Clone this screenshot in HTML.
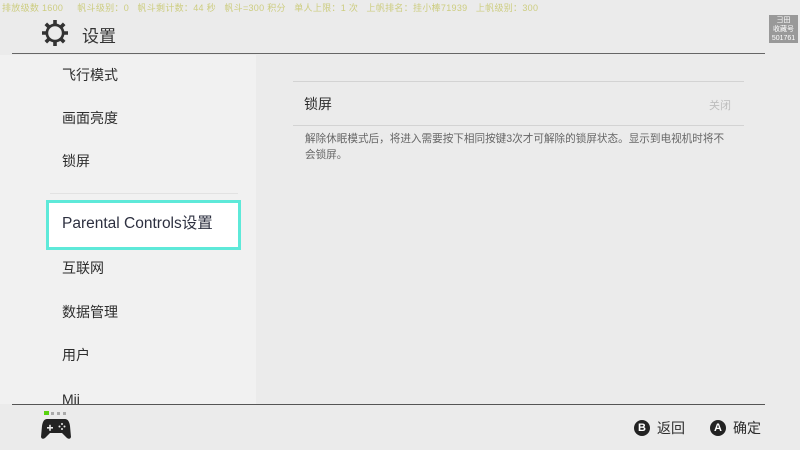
<!DOCTYPE html>
<html><head><meta charset="utf-8"><style>
*{margin:0;padding:0;box-sizing:border-box}
body{width:800px;height:450px;background:#ebebeb;font-family:"Liberation Sans","Noto Sans CJK SC",sans-serif;position:relative;overflow:hidden;color:#2d2d2d}
.a{position:absolute;white-space:nowrap}
.top{font-size:9px;color:#cdcd80;left:2px;top:1px;letter-spacing:0.3px}
.li{left:62px;font-size:14px;line-height:20px}
</style></head><body>
<div class="a top">排放级数 1600 &nbsp;&nbsp;&nbsp; 帆斗级别：0 &nbsp; 帆斗剩计数：44 秒 &nbsp; 帆斗=300 积分 &nbsp; 单人上限：1 次 &nbsp; 上帆排名：挂小棒71939 &nbsp; 上帆级别：300</div>
<svg class="a" style="left:40px;top:18px" width="30" height="30" viewBox="0 0 30 30"><g fill="#333"><circle cx="15" cy="15" r="9.5"/><g stroke="#333" stroke-width="3.6" stroke-linecap="butt"><line x1="15" y1="2" x2="15" y2="28"/><line x1="2" y1="15" x2="28" y2="15"/><line x1="5.8" y1="5.8" x2="24.2" y2="24.2"/><line x1="24.2" y1="5.8" x2="5.8" y2="24.2"/></g></g><circle cx="15" cy="15" r="6.8" fill="#ebebeb"/></svg>
<div class="a" style="left:82px;top:22px;font-size:17px;color:#333">设置</div>
<div class="a" style="left:769px;top:15px;width:29px;height:28px;background:#999;color:#fff;font-size:7px;text-align:center;line-height:9px;padding-top:1px">彐田<br>收藏号<br>501761</div>
<div class="a" style="left:12px;top:53px;width:753px;height:1px;background:#666"></div>
<div class="a" style="left:0;top:55px;width:256px;height:349px;background:#f1f1f1"></div>
<div class="a li" style="top:65px">飞行模式</div>
<div class="a li" style="top:108px">画面亮度</div>
<div class="a li" style="top:151px">锁屏</div>
<div class="a" style="left:50px;top:193px;width:188px;height:1px;background:#e2e2e2"></div>
<div class="a" style="left:46px;top:200px;width:195px;height:50px;background:#fff;border:3px solid #5ee9d9"></div>
<div class="a li" style="top:214px;font-size:15.5px;color:#2d3040">Parental Controls设置</div>
<div class="a li" style="top:258px">互联网</div>
<div class="a li" style="top:302px">数据管理</div>
<div class="a li" style="top:345px">用户</div>
<div class="a li" style="top:389px">Mii</div>
<div class="a" style="left:293px;top:81px;width:451px;height:1px;background:#d3d3d3"></div>
<div class="a" style="left:304px;top:94px;font-size:14px">锁屏</div>
<div class="a" style="left:709px;top:97px;font-size:11px;color:#bdbdbd">关闭</div>
<div class="a" style="left:293px;top:125px;width:451px;height:1px;background:#d3d3d3"></div>
<div class="a" style="left:305px;top:131px;font-size:10.6px;line-height:16px;color:#666;white-space:normal;width:440px">解除休眠模式后，将进入需要按下相同按键3次才可解除的锁屏状态。显示到电视机时将不<br>会锁屏。</div>
<div class="a" style="left:12px;top:404px;width:753px;height:1px;background:#555"></div>
<div class="a" style="left:0;top:405px;width:800px;height:45px;background:#ebebeb"></div>
<div class="a" style="left:44px;top:411px;width:5px;height:4px;background:#58d20e"></div>
<div class="a" style="left:51px;top:412px;width:3px;height:3px;background:#aaa"></div>
<div class="a" style="left:57px;top:412px;width:3px;height:3px;background:#aaa"></div>
<div class="a" style="left:63px;top:412px;width:3px;height:3px;background:#aaa"></div>
<svg class="a" style="left:41px;top:418px" width="30" height="22" viewBox="0 0 30 22"><path d="M6 1 H24 Q28 1 29 8 L30 19 Q29 22 26 20 L21 15 H9 L4 20 Q1 22 0 19 L1 8 Q2 1 6 1Z" fill="#222"/><g fill="#ebebeb"><rect x="6" y="9" width="6" height="1.6"/><rect x="8.2" y="6.8" width="1.6" height="6"/><circle cx="21" cy="6" r="1"/><circle cx="21" cy="11" r="1"/><circle cx="18.5" cy="8.5" r="1"/><circle cx="23.5" cy="8.5" r="1"/></g></svg>
<div class="a" style="left:634px;top:420px;width:16px;height:16px;border-radius:50%;background:#222;color:#fff;font-size:11px;font-weight:bold;text-align:center;line-height:16px">B</div>
<div class="a" style="left:657px;top:418px;font-size:14px">返回</div>
<div class="a" style="left:710px;top:420px;width:16px;height:16px;border-radius:50%;background:#222;color:#fff;font-size:11px;font-weight:bold;text-align:center;line-height:16px">A</div>
<div class="a" style="left:733px;top:418px;font-size:14px">确定</div>
</body></html>
